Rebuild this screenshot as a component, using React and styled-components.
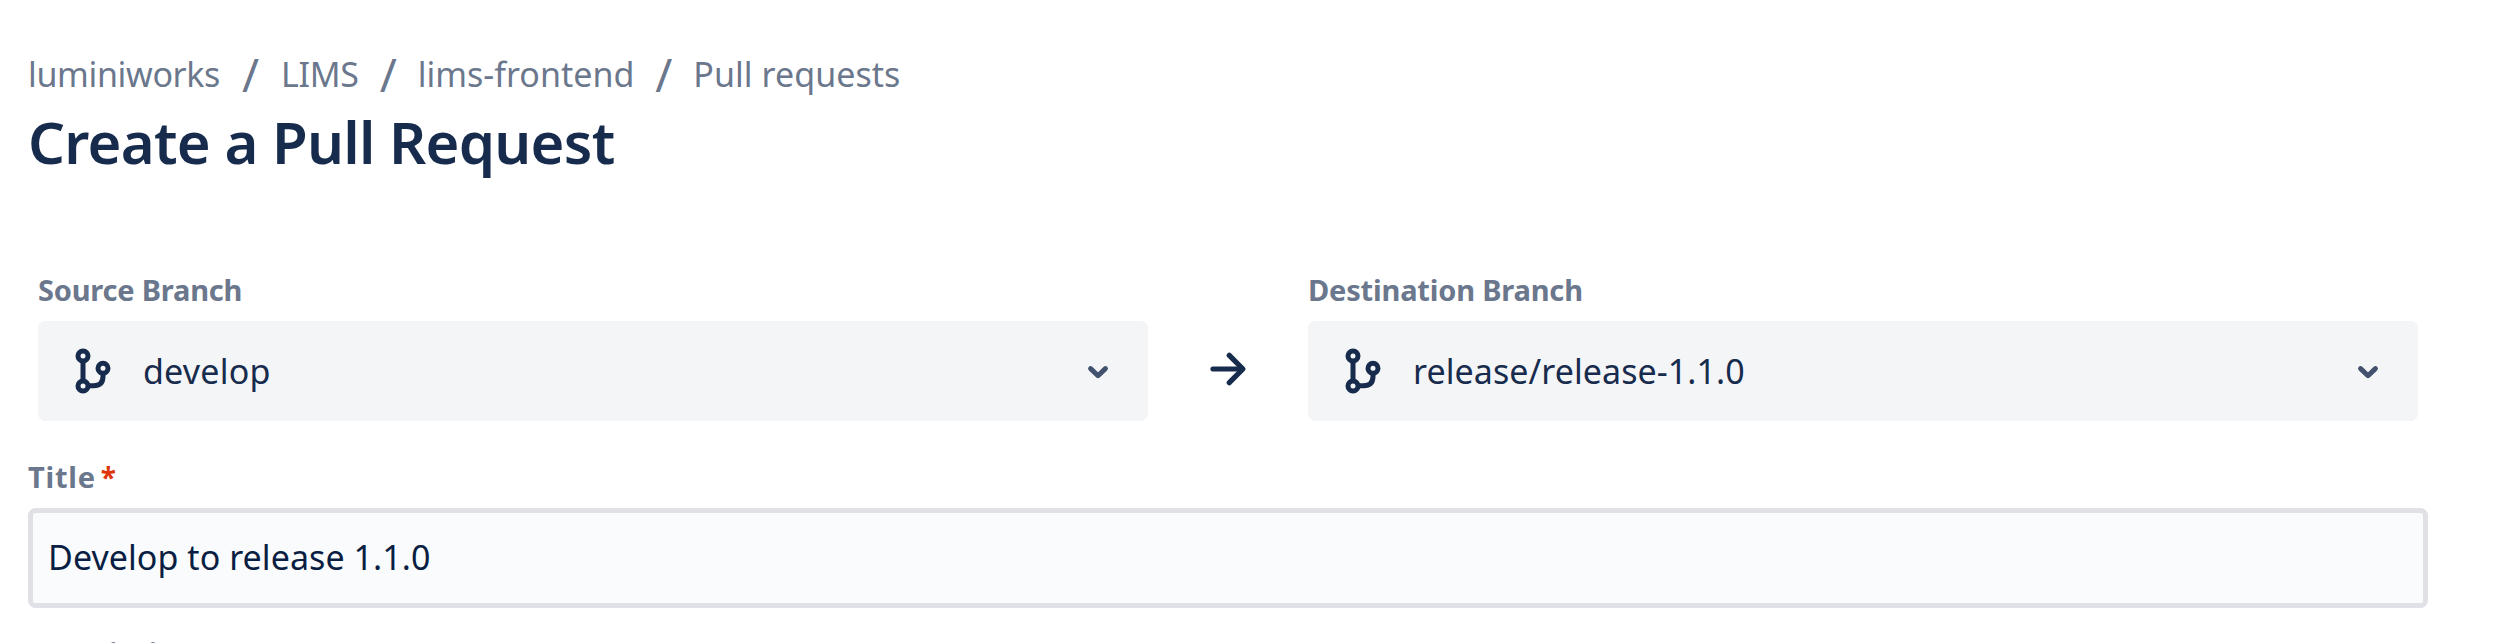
import React from 'react';
import styled, { createGlobalStyle } from 'styled-components';

const GlobalStyle = createGlobalStyle`
  *, *::before, *::after { box-sizing: border-box; }
  html, body { margin: 0; background: #fff; overflow: hidden; }
  body { font-family: "Noto Sans", "Open Sans", sans-serif; color: #172b4d; }
`;

const Page = styled.main`
  display: flex;
  flex-direction: column;
  height: 643px;
  padding: 54px 85px 0 28px;
  overflow: hidden;
  background: #fff;
`;

const Breadcrumbs = styled.nav`
  display: flex;
  align-items: center;
  flex: none;
  height: 40px;
  color: #6b778c;
`;

const Crumb = styled.a`
  font-size: 34px;
  line-height: 40px;
  letter-spacing: ${({ $tracking }) => $tracking}px;
  white-space: nowrap;
`;

const Slash = styled.span`
  width: 59px;
  font-size: 46px;
  font-weight: 400;
  line-height: 40px;
  text-align: center;

  &:first-of-type { width: 61px; }
`;

const Heading = styled.h1`
  flex: none;
  margin: 13px 0 0;
  font-size: 58px;
  font-weight: 600;
  line-height: 70px;
  letter-spacing: -0.72px;
`;

const BranchRow = styled.div`
  display: grid;
  grid-template-columns: 1fr 160px 1fr;
  align-items: end;
  flex: none;
  margin: 93px 10px 0;
`;

const Field = styled.div`
  display: flex;
  flex-direction: column;
  flex: none;
  margin-top: ${({ $gap = 0 }) => $gap}px;
`;

const Label = styled.label`
  display: flex;
  height: 40px;
  margin-bottom: 11px;
  color: #6b778c;
  font-size: 29px;
  font-weight: 700;
  line-height: 40px;
  letter-spacing: ${({ $tracking = 0 }) => $tracking}px;
  white-space: nowrap;
`;

const Required = styled.span`
  margin-left: 5px;
  color: #de350b;
  font-size: 28px;
  line-height: 41px;
`;

const BranchSelect = styled.div`
  display: flex;
  align-items: center;
  height: 100px;
  padding: 0 35px;
  border-radius: 7.5px;
  background: #f4f5f7;
`;

const BranchName = styled.span`
  flex: 1;
  margin-left: 30px;
  font-size: 34px;
  line-height: 40px;
  letter-spacing: ${({ $tracking }) => $tracking}px;
`;

const ArrowCell = styled.div`
  display: flex;
  align-items: center;
  justify-content: center;
  height: 100px;
`;

const TitleInput = styled.input`
  width: 100%;
  height: 100px;
  padding: 0 15px 2px;
  border: 5px solid #dfe1e6;
  border-radius: 7.5px;
  outline: none;
  background: #fafbfc;
  color: #091e42;
  font: 400 34px/40px "Noto Sans", "Open Sans", sans-serif;
  letter-spacing: 0.06px;
`;

const Icon = styled.svg`
  flex: none;
  fill: none;
  stroke: ${({ $color = '#172b4d' }) => $color};
  stroke-width: 5;
  stroke-linecap: round;
  stroke-linejoin: round;
`;

const BranchIcon = () => (
  <Icon width="40" height="48" viewBox="0 0 40 48">
    <circle cx="10" cy="9" r="5" />
    <circle cx="10" cy="39" r="5" />
    <circle cx="30" cy="21.3" r="5" />
    <path d="M10 14v20M15 38.7h5.5q9.5 0 9.5-9.5v-2.9" strokeLinecap="butt" />
  </Icon>
);

const ChevronIcon = () => (
  <Icon $color="#42526e" width="30" height="30" viewBox="0 0 30 30">
    <path d="M7.6 12.6 15 19.7l7.4-7.1" />
  </Icon>
);

const ArrowIcon = () => (
  <Icon width="50" height="50" viewBox="0 0 50 50">
    <path d="M9.9 23h29" />
    <path d="M26.3 9.3 39.9 23 26.3 36.7" strokeWidth="5.3" />
  </Icon>
);

const BranchField = ({ label, branch, labelTracking, nameTracking }) => (
  <Field>
    <Label $tracking={labelTracking}>{label}</Label>
    <BranchSelect>
      <BranchIcon />
      <BranchName $tracking={nameTracking}>{branch}</BranchName>
      <ChevronIcon />
    </BranchSelect>
  </Field>
);

export default function App() {
  return (
    <>
      <GlobalStyle />
      <Page>
        <Breadcrumbs>
          <Crumb $tracking={-0.35}>luminiworks</Crumb>
          <Slash>/</Slash>
          <Crumb $tracking={-0.3}>LIMS</Crumb>
          <Slash>/</Slash>
          <Crumb $tracking={0}>lims-frontend</Crumb>
          <Slash>/</Slash>
          <Crumb $tracking={0.05}>Pull requests</Crumb>
        </Breadcrumbs>
        <Heading>Create a Pull Request</Heading>
        <BranchRow>
          <BranchField label="Source Branch" branch="develop" labelTracking={-0.2} nameTracking={0.2} />
          <ArrowCell><ArrowIcon /></ArrowCell>
          <BranchField label="Destination Branch" branch="release/release-1.1.0" labelTracking={-0.18} nameTracking={0.07} />
        </BranchRow>
        <Field $gap={36}>
          <Label $tracking={0.75} htmlFor="title">Title<Required>*</Required></Label>
          <TitleInput id="title" defaultValue="Develop to release 1.1.0" />
        </Field>
        <Field $gap={25}>
          <Label>Description</Label>
        </Field>
      </Page>
    </>
  );
}
